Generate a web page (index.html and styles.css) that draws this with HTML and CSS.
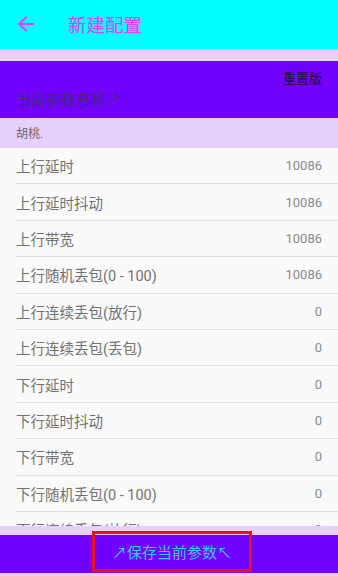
FILE: index.html
```html
<!DOCTYPE html>
<html lang="zh-CN">
<head>
<meta charset="utf-8">
<link rel="stylesheet" href="styles.css">
</head>
<body>
<div class="app">
  <header class="bar">
    <svg class="back" viewBox="0 0 24 24" width="24" height="24"><path d="M20 11H7.83l5.59-5.59L12 4l-8 8 8 8 1.41-1.41L7.83 13H20v-2z"/></svg>
    <span class="title">新建配置</span>
  </header>
  <section class="param">
    <div class="reset">重置版</div>
    <div class="pname">当前参数名称↗</div>
  </section>
  <div class="current">胡桃.</div>
  <div class="list">
    <div class="row"><span class="label">上行延时</span><span class="val">10086</span></div>
    <div class="row"><span class="label">上行延时抖动</span><span class="val">10086</span></div>
    <div class="row"><span class="label">上行带宽</span><span class="val">10086</span></div>
    <div class="row"><span class="label">上行随机丢包(0 - 100)</span><span class="val">10086</span></div>
    <div class="row"><span class="label">上行连续丢包(放行)</span><span class="val">0</span></div>
    <div class="row"><span class="label">上行连续丢包(丢包)</span><span class="val">0</span></div>
    <div class="row"><span class="label">下行延时</span><span class="val">0</span></div>
    <div class="row"><span class="label">下行延时抖动</span><span class="val">0</span></div>
    <div class="row"><span class="label">下行带宽</span><span class="val">0</span></div>
    <div class="row"><span class="label">下行随机丢包(0 - 100)</span><span class="val">0</span></div>
    <div class="row"><span class="label">下行连续丢包(放行)</span><span class="val">0</span></div>
    <div class="row"><span class="label">下行连续丢包(丢包)</span><span class="val">0</span></div>
  </div>
  <footer class="foot">
    <div class="savebar">
      <div class="savebtn">↗保存当前参数↖</div>
    </div>
  </footer>
</div>
</body>
</html>
```
FILE: styles.css
```css
html, body {
  margin: 0;
  padding: 0;
}
body {
  width: 338px;
  height: 576px;
  overflow: hidden;
  background: #e6d0fd;
  font-family: Roboto, "Noto Sans CJK SC", sans-serif;
}
.app {
  display: flex;
  flex-direction: column;
  height: 576px;
}
.bar {
  flex: none;
  height: 49px;
  background: #00ffff;
  display: flex;
  align-items: center;
  box-shadow: 0 1px 2px rgba(0,0,0,0.12);
}
.back {
  fill: #e040fb;
  margin-left: 14px;
  margin-top: -2px;
}
.title {
  margin-left: 30px;
  margin-top: -2px;
  font-size: 18.5px;
  color: #e040fb;
}
.param {
  flex: none;
  margin-top: 12px;
  height: 57px;
  background: #7300ff;
  padding: 0 16px;
  box-sizing: border-box;
}
.reset {
  text-align: right;
  font-size: 13px;
  line-height: 20px;
  padding-top: 8px;
  color: #1e1038;
}
.pname {
  font-size: 15px;
  line-height: 20px;
  margin-top: 1px;
  color: #40287a;
}
.current {
  flex: none;
  height: 30px;
  box-sizing: border-box;
  padding: 3px 16px 0;
  line-height: 27px;
  font-size: 12px;
  color: #6e6a75;
}
.list {
  flex: 1;
  min-height: 0;
  overflow: hidden;
  background: #fafafa;
}
.row {
  height: 35.4px;
  margin-left: 16px;
  padding-right: 16px;
  border-bottom: 1px solid #e2e2e2;
  display: flex;
  align-items: center;
  justify-content: space-between;
}
.label {
  font-size: 14.5px;
  color: #727272;
}
.val {
  font-size: 13px;
  color: #8a8a8a;
}
.foot {
  flex: none;
  margin-top: -9px;
  padding: 9px 0 3px;
  background: #e6d0fd;
}
.savebar {
  height: 38px;
  background: #7300ff;
  display: flex;
  justify-content: center;
}
.savebtn {
  width: 160px;
  height: 41px;
  box-sizing: border-box;
  margin: -4px 0 1px 6px;
  border: 3px solid #e8121c;
  display: flex;
  align-items: center;
  justify-content: center;
  font-size: 15px;
  color: #3fc6ff;
}
```
